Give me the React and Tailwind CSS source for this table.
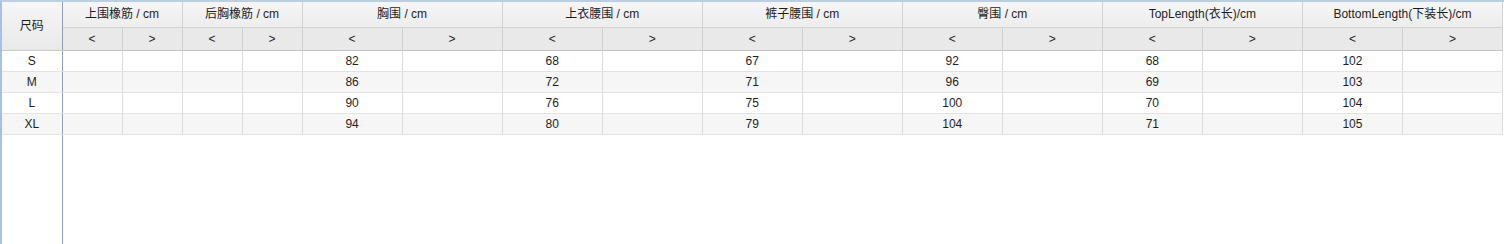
import React from "react";

const groups = [
  { label: "上围橡筋 / cm", w: "w-[120px]" },
  { label: "后胸橡筋 / cm", w: "w-[120px]" },
  { label: "胸围 / cm", w: "w-[200px]" },
  { label: "上衣腰围 / cm", w: "w-[200px]" },
  { label: "裤子腰围 / cm", w: "w-[200px]" },
  { label: "臀围 / cm", w: "w-[200px]" },
  { label: "TopLength(衣长)/cm", w: "w-[200px]" },
  { label: "BottomLength(下装长)/cm", w: "w-[200px]" },
];

const rows = [
  { size: "S", vals: ["", "", "82", "68", "67", "92", "68", "102"] },
  { size: "M", vals: ["", "", "86", "72", "71", "96", "69", "103"] },
  { size: "L", vals: ["", "", "90", "76", "75", "100", "70", "104"] },
  { size: "XL", vals: ["", "", "94", "80", "79", "104", "71", "105"] },
];

const font = { fontFamily: '"Liberation Sans", "Noto Sans CJK SC", sans-serif' };

export default function App() {
  return (
    <div
      className="w-[1504px] h-[244px] bg-white border-t-2 border-l-2 border-t-[#bccfe0] border-l-[#a6c0e8] flex flex-col text-[12px] text-[#1e1e1e] overflow-hidden"
      style={font}
    >
      <table className="table-fixed border-collapse w-[1501px]">
        <colgroup>
          <col className="w-[60px]" />
          {groups.map((g, i) =>
            i < 2 ? (
              <React.Fragment key={i}>
                <col className="w-[60px]" />
                <col className="w-[60px]" />
              </React.Fragment>
            ) : (
              <React.Fragment key={i}>
                <col className="w-[100px]" />
                <col className="w-[100px]" />
              </React.Fragment>
            )
          )}
        </colgroup>
        <thead>
          <tr className="h-[25px] bg-gradient-to-b from-[#f6f6f6] to-[#ededed]">
            <th
              rowSpan={2}
              className="font-normal border-r border-r-[#8f9cb2] border-b border-b-[#c9c9c9] bg-gradient-to-b from-[#f6f6f6] to-[#e9e9e9]"
            >
              尺码
            </th>
            {groups.map((g, i) => (
              <th
                key={i}
                colSpan={2}
                className="font-normal border border-[#d3d3d3] border-t-0 whitespace-nowrap"
              >
                {g.label}
              </th>
            ))}
          </tr>
          <tr className="h-[23px] bg-[#e9e9e9]">
            {groups.map((g, i) => (
              <React.Fragment key={i}>
                <th className="font-normal border border-[#cfcfcf] border-b-[#c4c4c4]">&lt;</th>
                <th className="font-normal border border-[#cfcfcf] border-b-[#c4c4c4]">&gt;</th>
              </React.Fragment>
            ))}
          </tr>
        </thead>
        <tbody>
          {rows.map((r, i) => (
            <tr key={r.size} className={`h-[21px] ${i % 2 ? "bg-[#f6f6f6]" : "bg-white"}`}>
              <td className="text-center border-r border-r-[#8f9cb2] border-b border-b-[#e3e3e3]">{r.size}</td>
              {r.vals.map((v, j) => (
                <React.Fragment key={j}>
                  <td className="text-center border border-[#dcdcdc] border-b-[#e3e3e3]">{v}</td>
                  <td className="border border-[#dcdcdc] border-b-[#e3e3e3]"></td>
                </React.Fragment>
              ))}
            </tr>
          ))}
        </tbody>
      </table>
      <div className="flex-1 flex">
        <div className="w-[61px] border-r border-r-[#8f9cb2]"></div>
      </div>
    </div>
  );
}
